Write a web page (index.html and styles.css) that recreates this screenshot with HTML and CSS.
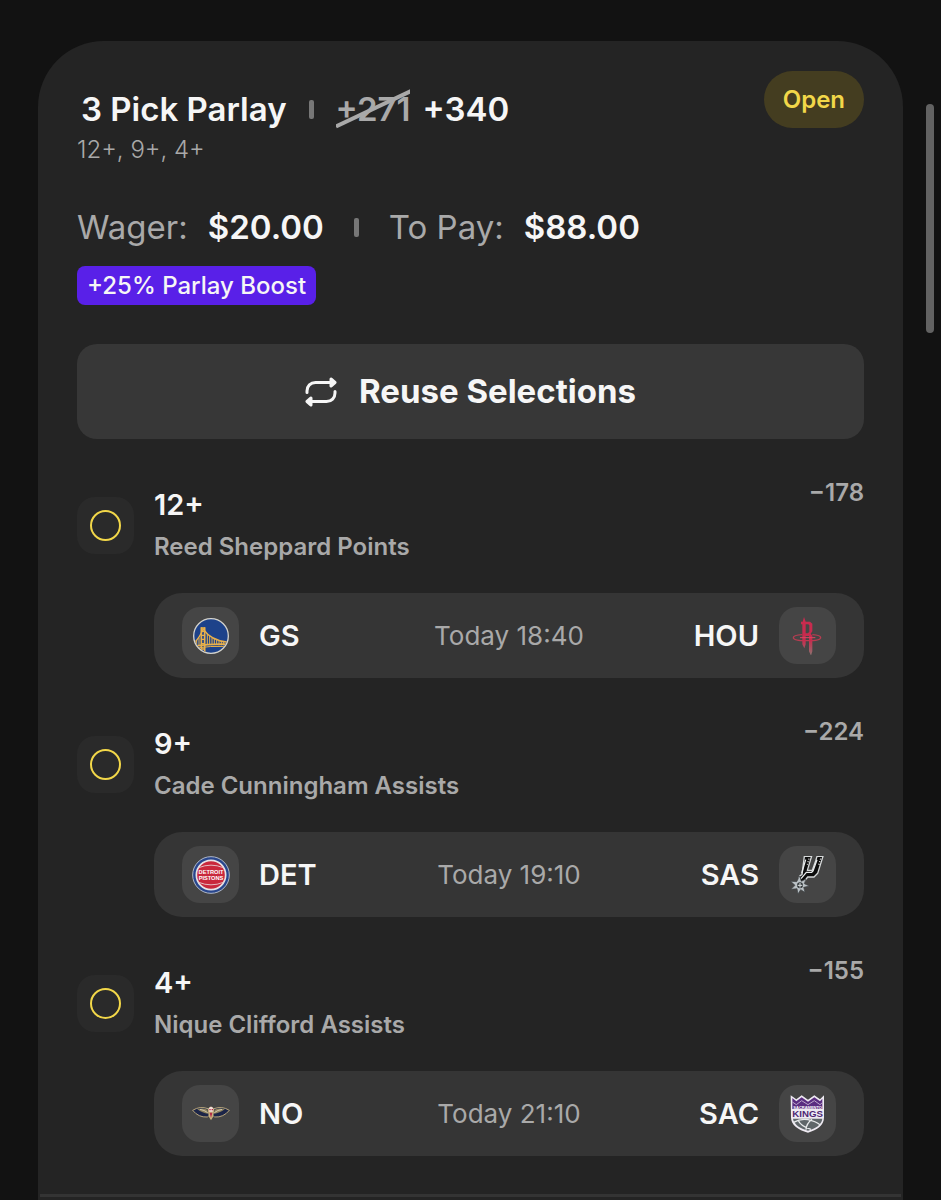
FILE: index.html
```html
<!DOCTYPE html>
<html lang="en">
<head>
    <meta charset="UTF-8">
    <meta name="viewport" content="width=device-width, initial-scale=1.0">
    <title>My Bets</title>
    <link rel="stylesheet" href="styles.css">
</head>
<body>
    <main class="bet-card">
        <header class="bet-header">
            <div>
                <h1 class="bet-title">
                    <span>3 Pick Parlay</span>
                    <span class="divider"></span>
                    <span class="odds-group">
                        <s class="old-odds">+271<svg class="slash" viewBox="0 0 76 40" preserveAspectRatio="none" aria-hidden="true"><path d="M0 37.500L76 2" stroke="#a9a9a9" stroke-width="4"/></svg></s>
                        <span>+340</span>
                    </span>
                </h1>
                <p class="bet-summary">12+, 9+, 4+</p>
            </div>
            <span class="status-badge">Open</span>
        </header>

        <div class="stakes">
            <span class="stake"><span class="stake-label">Wager:</span> <strong>$20.00</strong></span>
            <span class="divider"></span>
            <span class="stake"><span class="stake-label">To Pay:</span> <strong>$88.00</strong></span>
        </div>
        <span class="boost">+25% Parlay Boost</span>

        <button type="button" class="reuse-button">
            <svg class="reuse-icon" viewBox="0 0 32 30" fill="none" stroke="currentColor" stroke-width="3" stroke-linecap="round" stroke-linejoin="round" aria-hidden="true">
                <path d="M2 15.500V14C2 9 5.500 5.500 10.500 5.500H28"/>
                <path d="M30 14.500V16c0 5-3.500 8.500-8.500 8.500H4"/>
                <path d="M26 2l4 3.500L26 9zM6 21l-4 3.500L6 28z" fill="currentColor"/>
            </svg>
            Reuse Selections
        </button>

        <section class="leg">
            <div class="leg-head">
                <span class="leg-status"></span>
                <div class="leg-text">
                    <h2>12+</h2>
                    <p>Reed Sheppard Points</p>
                </div>
                <span class="leg-odds">−178</span>
            </div>
            <div class="match">
                <div class="team">
                    <span class="team-logo">
                        <svg viewBox="0 0 114 114" aria-hidden="true">
                            <defs><clipPath id="gs"><circle cx="57" cy="57" r="50"/></clipPath></defs>
                            <circle cx="57" cy="57" r="52" fill="#1d428a" stroke="#d3d2cc" stroke-width="4"/>
                            <g clip-path="url(#gs)" fill="none" stroke="#e9b04a" stroke-width="3">
                                <path d="M4 80Q24 62 33 36Q58 72 110 76" stroke-width="4"/>
                                <path d="M14 71v14M21 63v22M46 50v32M53 57v26M60 62v22M67 66v18M74 69v15M81 71v14M88 73v12M95 75v10"/>
                                <path d="M3 88Q55 80 111 82" stroke-width="5"/>
                                <path d="M3 94Q55 86 111 88" stroke-width="3"/>
                                <path d="M28 31V112M38 31V112" stroke-width="5"/>
                                <path d="M27 33h12M27 43h12M27 55h12M27 67h12M27 80h12M27 96h12" stroke-width="4"/>
                            </g>
                        </svg>
                    </span>
                    <span>GS</span>
                </div>
                <time>Today 18:40</time>
                <div class="team away">
                    <span>HOU</span>
                    <span class="team-logo">
                        <svg viewBox="0 0 114 114" aria-hidden="true">
                            <defs><linearGradient id="hou" x2="0" y2="1"><stop offset=".6" stop-color="#c72b4e"/><stop offset="1" stop-color="#8d7470"/></linearGradient></defs>
                            <path d="M40 53C24 54 13 57 13 62c0 6 18 9 41 9s41-3 41-9c0-5-11-8-25-9" fill="none" stroke="#b63d51" stroke-width="4"/>
                            <path d="M45 0l5 14h13l7 6v23l-5 7 5 6v47l-4 13-6-13V57H50v25l-4 12-6-12V22h-4v-8h5zM50 22v27h7l4-5V25l-3-3z" fill="url(#hou)" fill-rule="evenodd"/>
                            <path d="M33 62h46" stroke="#dd4562" stroke-width="3"/>
                        </svg>
                    </span>
                </div>
            </div>
        </section>

        <section class="leg">
            <div class="leg-head">
                <span class="leg-status"></span>
                <div class="leg-text">
                    <h2>9+</h2>
                    <p>Cade Cunningham Assists</p>
                </div>
                <span class="leg-odds">−224</span>
            </div>
            <div class="match">
                <div class="team">
                    <span class="team-logo">
                        <svg viewBox="0 0 114 114" aria-hidden="true">
                            <circle cx="57" cy="57" r="55" fill="#28468d" stroke="#aeb7c7" stroke-width="3"/>
                            <circle cx="57" cy="57" r="44" fill="#c9283c" stroke="#e7e4e6" stroke-width="5"/>
                            <path d="M20 35Q57 20 94 35M20 79Q57 94 94 79" fill="none" stroke="#e5bac0" stroke-width="3"/>
                            <text x="57" y="55" class="pistons-text">DETROIT</text>
                            <text x="57" y="73" class="pistons-text">PISTONS</text>
                        </svg>
                    </span>
                    <span>DET</span>
                </div>
                <time>Today 19:10</time>
                <div class="team away">
                    <span>SAS</span>
                    <span class="team-logo">
                        <svg viewBox="0 0 114 114" aria-hidden="true">
                            <path d="M46 1h22l-3 9-10 33h15l10-28 4-14h18l-4 13-12 38-11 11H56L43 80l-9-3-5-9 4-9 6-3z" fill="#0c0c0c" stroke="#d5d8d9" stroke-width="4" stroke-linejoin="round"/>
                            <path d="M50 11L38 52M84 11L72 45l-4 4H52L36 68" fill="none" stroke="#e9eced" stroke-width="4"/>
                            <path d="M60 8l-5 18M95 8l-6 20" fill="none" stroke="#f0f0f0" stroke-width="4" stroke-dasharray="3 5"/>
                            <path d="M32 60l5 16 14-7-5 14 15 7-17 4 4 15-13-8-8 13-3-16-18 2 12-12L5 76l18 1z" fill="#bac1c5" stroke="#3c4144" stroke-width="2"/>
                            <circle cx="33" cy="88" r="9" fill="#343a3d"/>
                            <path d="M33 81v14M26 88h14" stroke="#dce1e3" stroke-width="3"/>
                        </svg>
                    </span>
                </div>
            </div>
        </section>

        <section class="leg">
            <div class="leg-head">
                <span class="leg-status"></span>
                <div class="leg-text">
                    <h2>4+</h2>
                    <p>Nique Clifford Assists</p>
                </div>
                <span class="leg-odds">−155</span>
            </div>
            <div class="match">
                <div class="team">
                    <span class="team-logo">
                        <svg viewBox="0 0 114 114" aria-hidden="true">
                            <path d="M2 46Q24 32 48 41l4 20-6 5Q20 68 2 46zM112 46Q90 32 66 41l-4 20 6 5q26 2 44-20z" fill="#1c2548" stroke="#b7a57b" stroke-width="3" stroke-linejoin="round"/>
                            <path d="M16 43q16-5 30 1l3 12q-18-1-33-13zM98 43q-16-5-30 1l-3 12q18-1 33-13z" fill="#8f845f"/>
                            <path d="M24 43q13 2 23 10M90 43q-13 2-23 10" fill="none" stroke="#d1c7ac" stroke-width="3"/>
                            <path d="M48 42q9-15 18 0l-3 24-6 10-6-10z" fill="#c9b07e"/>
                            <path d="M50 41q7-11 14 0l-2 9H52z" fill="#f0dfda"/>
                            <path d="M52 42h4v4h-4zM59 42h4v4h-4zM53 53h8l-4 16z" fill="#b42947"/>
                        </svg>
                    </span>
                    <span>NO</span>
                </div>
                <time>Today 21:10</time>
                <div class="team away">
                    <span>SAC</span>
                    <span class="team-logo">
                        <svg viewBox="0 0 114 114" aria-hidden="true">
                            <path d="M5 1l17 12L38 1l19 13L76 1l17 12 12-12v66c0 25-20 38-48 46C26 105 6 90 6 67z" fill="#eeeaf2"/>
                            <path d="M10 9l12 10L38 7l19 13L76 7l17 12 7-8v31H10z" fill="#5a2d81"/>
                            <path d="M10 21l12 8 16-12 19 12 19-12 17 12 7-6" fill="none" stroke="#bba6cb" stroke-width="3"/>
                            <path d="M12 71h88c-2 18-20 29-43 36-24-7-42-18-45-36z" fill="#5f6669"/>
                            <path d="M14 82q20-12 43-8 23 5 37 16M27 75q8 19 39 28M69 73q-17 13-18 31" fill="none" stroke="#e8eaeb" stroke-width="4"/>
                            <text x="56" y="41" class="kings-city">SACRAMENTO</text>
                            <text x="56" y="66" class="kings-name">KINGS</text>
                        </svg>
                    </span>
                </div>
            </div>
        </section>

        <hr class="card-line">
    </main>
    <div class="scroll-thumb"></div>
</body>
</html>
```
FILE: styles.css
```css
* {
    box-sizing: border-box;
    margin: 0;
    padding: 0;
}

body {
    min-height: 100vh;
    display: flex;
    flex-direction: column;
    padding: 41px 38px 0;
    background-color: #121212;
    color: #f6f6f6;
    font-family: Inter, sans-serif;
    font-size: 24px;
    position: relative;
}

.bet-card {
    flex: 1;
    padding: 30px 39px 0;
    background-color: #242424;
    border-radius: 66px 66px 0 0;
}

.bet-header {
    display: flex;
    justify-content: space-between;
    align-items: flex-start;
}

.bet-title {
    display: flex;
    align-items: center;
    gap: 22px;
    padding: 18px 4px 0;
    font-size: 33px;
    line-height: 40px;
    font-weight: 600;
}

.divider {
    width: 5px;
    height: 19px;
    border-radius: 2px;
    background-color: #777;
}

.odds-group {
    display: flex;
    gap: 12px;
}

.old-odds {
    position: relative;
    color: #a9a9a9;
    text-decoration: none;
}

/* diagonal strike over the old price */
.slash {
    position: absolute;
    left: 0;
    top: 0;
    width: 100%;
    height: 40px;
}

.bet-summary {
    color: #a9a9a9;
    line-height: 42px;
    font-weight: 300;
}

.status-badge {
    padding: 14px 19px;
    border-radius: 29px;
    background-color: #443d20;
    color: #f2d749;
    line-height: 29px;
    font-weight: 600;
}

.stakes {
    display: flex;
    align-items: center;
    gap: 30px;
    margin-top: 36px;
    font-size: 33px;
    line-height: 40px;
}

.stake {
    display: flex;
    gap: 20px;
}

.stake strong {
    font-weight: 600;
}

.stake-label {
    color: #a9a9a9;
    font-weight: 400;
}

.boost {
    display: block;
    width: fit-content;
    margin-top: 19px;
    padding: 0 10px;
    border-radius: 8px;
    background-color: #5920e8;
    line-height: 39px;
    font-weight: 500;
}

.reuse-button {
    display: flex;
    align-items: center;
    justify-content: center;
    gap: 22px;
    width: 100%;
    margin-top: 39px;
    padding: 27px;
    border: none;
    border-radius: 20px;
    background-color: #373737;
    color: #f6f6f6;
    font-family: inherit;
    font-size: 33px;
    line-height: 41px;
    font-weight: 700;
    cursor: pointer;
}

.reuse-icon {
    width: 32px;
    height: 30px;
}

.leg {
    margin-top: 41px;
}

.leg-head {
    display: flex;
    align-items: center;
    gap: 20px;
    min-height: 90px;
}

.leg-status {
    display: flex;
    align-items: center;
    justify-content: center;
    width: 57px;
    height: 57px;
    border-radius: 18px;
    background-color: #2a2a2a;
}

.leg-status::before {
    content: "";
    width: 27px;
    height: 27px;
    border: 2px solid #f2d749;
    border-radius: 50%;
}

.leg-text {
    flex: 1;
}

.leg-text h2 {
    font-size: 29px;
    line-height: 44px;
    font-weight: 600;
}

.leg-text p {
    color: #a9a9a9;
    line-height: 40px;
    font-weight: 600;
}

.leg-odds {
    align-self: flex-start;
    color: #a9a9a9;
    line-height: 26px;
    font-weight: 600;
}

.match {
    display: grid;
    grid-template-columns: 1fr auto 1fr;
    align-items: center;
    margin: 23px 0 0 77px;
    padding: 14px 28px;
    border-radius: 28px;
    background-color: #353535;
}

.match time {
    color: #a9a9a9;
    font-size: 26px;
    font-weight: 400;
}

.team {
    display: flex;
    align-items: center;
    gap: 20px;
    font-size: 29px;
    font-weight: 600;
}

.away {
    justify-content: flex-end;
}

.team-logo {
    display: flex;
    align-items: center;
    justify-content: center;
    width: 57px;
    height: 57px;
    border-radius: 18px;
    background-color: #454545;
}

.team-logo svg {
    width: 38px;
    height: 38px;
}

.pistons-text,
.kings-city,
.kings-name {
    font-family: "Liberation Sans", sans-serif;
    font-weight: 700;
    text-anchor: middle;
}

.pistons-text {
    font-size: 17px;
    fill: #fff;
}

.kings-city {
    font-size: 12px;
    fill: #fff;
}

.kings-name {
    font-size: 29px;
    fill: #4d2672;
}

.card-line {
    height: 3px;
    margin: 38px -37px 3px;
    border: none;
    background-color: #343434;
}

.scroll-thumb {
    position: absolute;
    top: 104px;
    right: 7px;
    width: 8px;
    height: 229px;
    border-radius: 4px;
    background-color: #626262;
}
```
